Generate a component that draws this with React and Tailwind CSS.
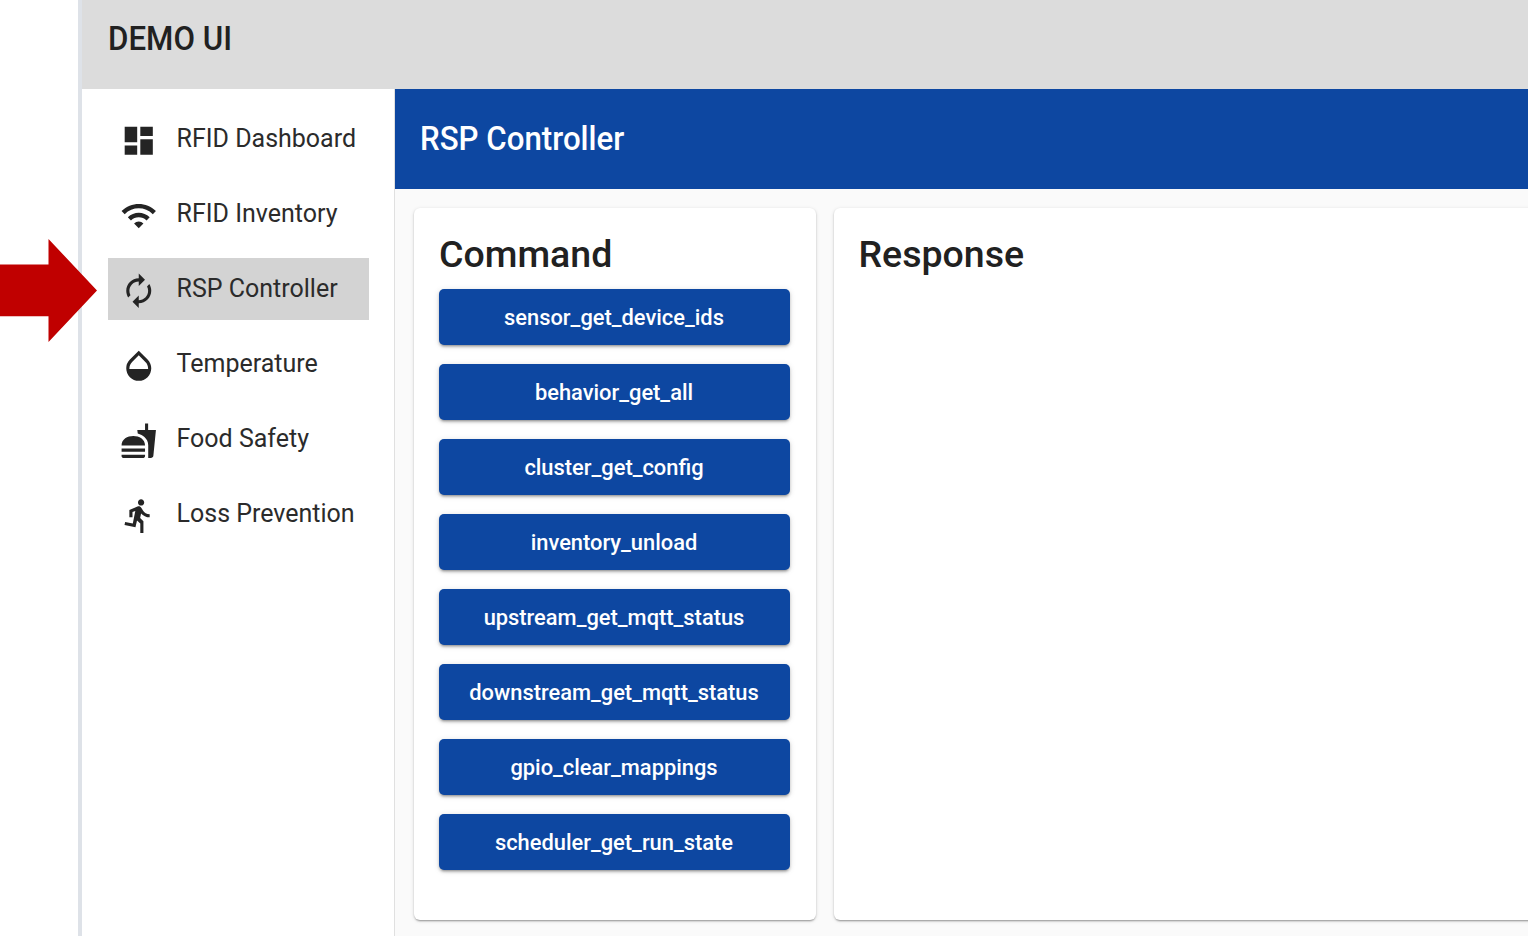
import { MdDashboard, MdWifi, MdAutorenew, MdOpacity, MdFastfood, MdDirectionsRun } from "react-icons/md";

const nav = [
  { label: "RFID Dashboard", Icon: MdDashboard },
  { label: "RFID Inventory", Icon: MdWifi },
  { label: "RSP Controller", Icon: MdAutorenew, active: true },
  { label: "Temperature", Icon: MdOpacity },
  { label: "Food Safety", Icon: MdFastfood },
  { label: "Loss Prevention", Icon: MdDirectionsRun },
];

const commands = [
  "sensor_get_device_ids",
  "behavior_get_all",
  "cluster_get_config",
  "inventory_unload",
  "upstream_get_mqtt_status",
  "downstream_get_mqtt_status",
  "gpio_clear_mappings",
  "scheduler_get_run_state",
];

function NavItem({ label, Icon, active }) {
  return (
    <a className={`flex h-[62px] items-center gap-[19px] pl-3 ${active ? "bg-[#d3d3d3]" : ""}`}>
      <Icon className="mt-[3px] size-[37.5px] shrink-0 text-[#242424]" />
      <span className="origin-center scale-y-[1.04] whitespace-nowrap text-[25px] leading-8 text-[#2b2b2b]">{label}</span>
    </a>
  );
}

function Card({ title, className, children }) {
  return (
    <section
      className={`rounded-md bg-white pt-[25px] shadow-[0_3px_2px_-2px_rgba(0,0,0,0.2),0_1px_2px_rgba(0,0,0,0.2),0_1px_4px_rgba(0,0,0,0.1)] ${className}`}
    >
      <h2 className="mb-2 h-12 text-[37.5px] font-medium leading-[43px] text-[#212121]">{title}</h2>
      {children}
    </section>
  );
}

export default function App() {
  return (
    <div className="relative flex h-[936px] w-[1528px] overflow-hidden bg-white pl-[78px] font-['Roboto',sans-serif]">
      <div className="flex min-w-0 flex-1 flex-col">
        <header className="flex h-[89px] shrink-0 items-center border-l-4 border-[#dee2e8] bg-[#dcdcdc] pb-2 pl-[26px] text-[31.25px] font-medium text-[#212121]">
          <span className="scale-y-[1.05]">DEMO UI</span>
        </header>
        <div className="flex min-h-0 flex-1">
          <nav className="flex w-[317px] shrink-0 flex-col gap-[13px] border-l-4 border-r border-l-[#dee2e8] border-r-[#e0e0e0] bg-white pl-[26px] pr-[25.500px] pt-[19px]">
            {nav.map((item) => (
              <NavItem key={item.label} {...item} />
            ))}
          </nav>
          <main className="flex min-w-0 flex-1 flex-col bg-[#fafafa]">
            <div className="flex h-[100px] shrink-0 items-center bg-[#0d47a1] pl-[25px] text-[31.25px] font-medium text-white">
              <span className="scale-y-[1.05] pt-px">RSP Controller</span>
            </div>
            <div className="flex flex-1 gap-[18.500px] pb-4 pl-[19px] pt-[19px]">
              <Card title="Command" className="w-[401.500px] shrink-0 pl-[25px] pr-[25.500px]">
                <div className="flex flex-col gap-[18.800px]">
                  {commands.map((name) => (
                    <button
                      key={name}
                      className="h-[56.200px] rounded-[5px] bg-[#0d47a1] pr-px pt-0.5 text-[21.875px] font-medium text-white shadow-[0_3px_2px_-2px_rgba(0,0,0,0.2),0_2px_3px_rgba(0,0,0,0.2),0_1px_6px_rgba(0,0,0,0.12)]"
                    >
                      {name}
                    </button>
                  ))}
                </div>
              </Card>
              <Card title="Response" className="-mr-5 flex-1 px-[24.500px]" />
            </div>
          </main>
        </div>
      </div>
      <svg className="absolute left-0 top-[239px]" width="98" height="104" viewBox="0 0 98 104">
        <path d="M0 25.500H48.500V0L97 51.500 48.500 103V77.200H0z" fill="#c00000" />
      </svg>
    </div>
  );
}
